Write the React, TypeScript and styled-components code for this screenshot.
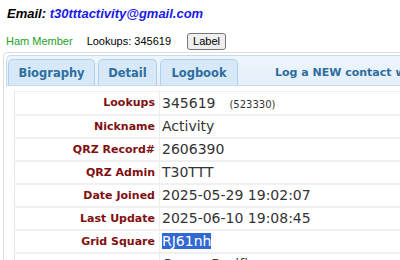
import React from 'react';
import styled, { createGlobalStyle } from 'styled-components';

const GlobalStyle = createGlobalStyle`
  body {
    margin: 0;
    background: #fff;
    font-family: "Liberation Sans", Arial, sans-serif;
    overflow: hidden;
  }
`;

const Page = styled.div`
  width: 400px;
  height: 260px;
  overflow: hidden;
  padding: 0 0 0 3px;
  box-sizing: border-box;
`;

const EmailLine = styled.div`
  padding: 6px 0 0 4px;
  height: 22px;
  font-size: 13px;
  font-weight: bold;
  font-style: italic;
  color: #000;
`;

const EmailLink = styled.span`
  color: #1a1ae6;
`;

const InfoLine = styled.div`
  display: flex;
  align-items: center;
  height: 22px;
  padding: 2px 0 0 3px;
  font-size: 11px;
`;

const Member = styled.span`
  color: #22a122;
  margin-right: 14px;
`;

const Count = styled.span`
  color: #000;
  margin-right: 16px;
`;

const LabelButton = styled.button`
  font-family: "Liberation Sans", Arial, sans-serif;
  font-size: 11px;
  padding: 0 5px;
  height: 17px;
  border: 1px solid #767676;
  border-radius: 3px;
  background: #efefef;
  color: #000;
`;

const Panel = styled.div`
  border: 1px solid #dddddd;
  border-right: none;
  border-radius: 5px 0 0 0;
  padding: 2px 0 0 2px;
`;

const TabBar = styled.div`
  display: flex;
  align-items: flex-end;
  gap: 3px;
  height: 29px;
  overflow: hidden;
  padding: 0 0 0 1px;
  background: linear-gradient(#eef5fc, #e4effa);
  border: 1px solid #c5dbec;
  border-right: none;
  border-radius: 5px 0 0 0;
`;

const Tab = styled.div<{ $w: number }>`
  flex-shrink: 0;
  width: ${p => p.$w}px;
  height: 26px;
  box-sizing: border-box;
  display: flex;
  align-items: center;
  justify-content: center;
  background: #d7e9f8;
  border: 1px solid #aed0ea;
  border-bottom: none;
  border-radius: 5px 5px 0 0;
  color: #2e6e9e;
  font-family: "DejaVu Sans", Verdana, sans-serif;
  font-size: 11.5px;
  font-weight: bold;
`;

const TabLink = styled.div`
  flex-shrink: 0;
  margin-left: 34px;
  align-self: center;
  padding-top: 3px;
  white-space: nowrap;
  color: #2e6e9e;
  font-family: "DejaVu Sans", Verdana, sans-serif;
  font-size: 11px;
  font-weight: bold;
`;

const Body = styled.div`
  padding: 5px 0 0 8px;
`;

const Details = styled.table`
  border-collapse: collapse;
  width: 400px;
  border-left: 1px solid #e6e6e6;
  border-top: 1px solid #eeeeee;
`;

const Row = styled.tr`
  height: 23px;
  border-bottom: 2px solid #f0f0f0;
`;

const Key = styled.td`
  width: 140px;
  padding: 0 4px 0 0;
  text-align: right;
  border-right: 1px solid #eeeeee;
  color: #7f1010;
  font-family: "DejaVu Sans", Verdana, sans-serif;
  font-size: 11px;
  font-weight: bold;
  white-space: nowrap;
`;

const Value = styled.td`
  padding: 0 0 0 2px;
  color: #333;
  font-family: "DejaVu Sans", Verdana, sans-serif;
  font-size: 14px;
  white-space: nowrap;
`;

const Small = styled.span`
  margin-left: 14px;
  font-size: 10px;
  color: #333;
`;

const Selected = styled.span`
  background: #3168d4;
  color: #fff;
`;

const rows: [string, React.ReactNode][] = [
  ['Lookups', <>345619<Small>(523330)</Small></>],
  ['Nickname', 'Activity'],
  ['QRZ Record#', '2606390'],
  ['QRZ Admin', 'T30TTT'],
  ['Date Joined', '2025-05-29 19:02:07'],
  ['Last Update', '2025-06-10 19:08:45'],
  ['Grid Square', <Selected>RJ61nh</Selected>],
  ['Zone', 'Ocean Pacific'],
];

export default function App() {
  return (
    <Page>
      <GlobalStyle />
      <EmailLine>
        Email: <EmailLink>t30tttactivity@gmail.com</EmailLink>
      </EmailLine>
      <InfoLine>
        <Member>Ham Member</Member>
        <Count>Lookups: 345619</Count>
        <LabelButton>Label</LabelButton>
      </InfoLine>
      <Panel>
        <TabBar>
          <Tab $w={87}>Biography</Tab>
          <Tab $w={59}>Detail</Tab>
          <Tab $w={78}>Logbook</Tab>
          <TabLink>Log a NEW contact with T30TTT</TabLink>
        </TabBar>
        <Body>
          <Details>
            <tbody>
              {rows.map(([k, v]) => (
                <Row key={k}>
                  <Key>{k}</Key>
                  <Value>{v}</Value>
                </Row>
              ))}
            </tbody>
          </Details>
        </Body>
      </Panel>
    </Page>
  );
}
